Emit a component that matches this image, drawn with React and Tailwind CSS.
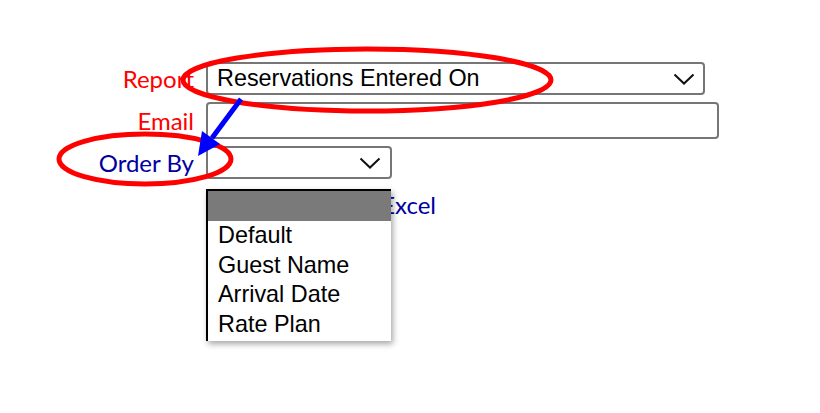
import React from 'react'

function Chevron({ className }) {
    return (
        <svg className={className} width="22" height="12" viewBox="0 0 22 12" fill="none">
            <path d="M1.5 1.5 L11 10.5 L20.5 1.5" stroke="#111" strokeWidth="2" />
        </svg>
    )
}

export default function App() {
    const options = ['Default', 'Guest Name', 'Arrival Date', 'Rate Plan']
    return (
        <div className="relative w-[820px] h-[413px] bg-white overflow-hidden">
            <div className="pt-[62px] grid grid-cols-[194px_auto] gap-x-3 gap-y-[7px] items-center font-['Lato',sans-serif] text-[24px]">
                <div className="text-right text-[#ff0000] leading-none">Report</div>
                <div className="w-[499px] h-[33px] border-2 border-[#767676] rounded-[4px] flex items-center justify-between pl-[9px] pr-[8px] font-['Liberation_Sans',Arial,sans-serif] text-[23.4px] text-black">
                    <span>Reservations Entered On</span>
                    <Chevron />
                </div>

                <div className="text-right text-[#ff0000] leading-none">Email</div>
                <div className="w-[513px] h-[37px] border-2 border-[#767676] rounded-[4px]" />

                <div className="text-right text-[#0000a0] leading-none">Order By</div>
                <div className="w-[186px] h-[33px] border-2 border-[#767676] rounded-[4px] flex items-center justify-end pr-[9px]">
                    <Chevron />
                </div>

                <div />
                <div className="mt-[7px] w-[230px] h-[24px] flex items-center justify-end text-[#0000a0] leading-none">
                    <span>Export to Excel</span>
                </div>
            </div>

            {/* open dropdown list */}
            <div className="absolute left-[206px] top-[189px] w-[185px] h-[152px] bg-white border-l-2 border-t-2 border-black shadow-[2px_3px_6px_rgba(0,0,0,0.35)] font-['Liberation_Sans',Arial,sans-serif] text-[23.4px] text-black">
                <div className="h-[30px] bg-[#7a7a7a]" />
                {options.map((o) => (
                    <div key={o} className="h-[29.5px] leading-[29.5px] pl-[10px]">{o}</div>
                ))}
            </div>

            {/* annotations */}
            <svg className="absolute inset-0 pointer-events-none" width="820" height="413" viewBox="0 0 820 413">
                <ellipse cx="367" cy="80" rx="184" ry="31" fill="none" stroke="#ff0000" strokeWidth="5" />
                <ellipse cx="145" cy="159" rx="86" ry="25" fill="none" stroke="#ff0000" strokeWidth="5" />
                <line x1="241" y1="99" x2="212" y2="138" stroke="#0000ff" strokeWidth="5" />
                <polygon points="198,156 202,131 220,144" fill="#0000ff" />
            </svg>
        </div>
    )
}
